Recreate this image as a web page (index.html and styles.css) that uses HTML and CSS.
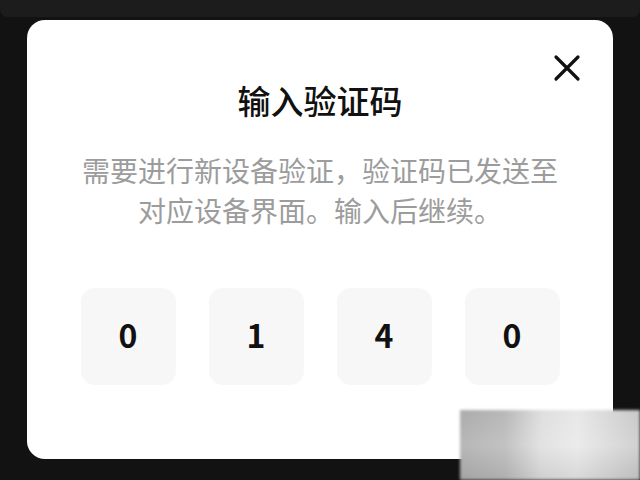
FILE: index.html
```html
<!DOCTYPE html>
<html lang="zh-CN">
<head>
<meta charset="utf-8">
<title>输入验证码</title>
<link rel="stylesheet" href="styles.css">
</head>
<body>
<div class="screen">
  <div class="topband"></div>
  <div class="dialog">
    <button class="close" aria-label="关闭">
      <svg width="28" height="28" viewBox="0 0 28 28"><path d="M3 3 L25 25 M25 3 L3 25" stroke="#111" stroke-width="3.2" stroke-linecap="round" fill="none"/></svg>
    </button>
    <h1 class="title">输入验证码</h1>
    <p class="desc">需要进行新设备验证，验证码已发送至<br>对应设备界面。输入后继续。</p>
    <div class="code">
      <div class="cell">0</div>
      <div class="cell">1</div>
      <div class="cell">4</div>
      <div class="cell">0</div>
    </div>
  </div>
  <div class="mark"></div>
</div>
</body>
</html>
```

FILE: styles.css
```css
html, body {
  margin: 0;
  padding: 0;
  background: #121212;
}
.screen {
  position: relative;
  width: 640px;
  height: 480px;
  overflow: hidden;
  background: #121212;
  font-family: "Noto Sans CJK SC", "Noto Sans", sans-serif;
}
.topband {
  position: absolute;
  left: 0;
  top: 0;
  width: 640px;
  height: 17px;
  background: #1c1c1c;
  border-radius: 0 0 8px 8px;
}
.dialog {
  position: relative;
  margin: 20px 0 0 27px;
  width: 586px;
  height: 439px;
  box-sizing: border-box;
  background: #ffffff;
  border-radius: 18px;
  padding-top: 58px;
  display: flex;
  flex-direction: column;
  align-items: center;
}
.close {
  position: absolute;
  left: 526px;
  top: 34px;
  width: 28px;
  height: 28px;
  padding: 0;
  border: 0;
  background: transparent;
  display: flex;
}
.title {
  margin: 0;
  font-size: 33px;
  line-height: 45px;
  font-weight: 500;
  color: #111;
}
.desc {
  margin: 27px 0 0;
  font-size: 28px;
  line-height: 40px;
  color: #9c9c9c;
  text-align: center;
}
.code {
  margin-top: 58px;
  display: flex;
  gap: 33px;
}
.cell {
  width: 95px;
  height: 97px;
  box-sizing: border-box;
  padding-bottom: 5px;
  border-radius: 14px;
  background: #f7f7f7;
  display: flex;
  align-items: center;
  justify-content: center;
  font-weight: 700;
  font-size: 32px;
  color: #111;
}
.mark {
  position: absolute;
  left: 460px;
  top: 410px;
  width: 180px;
  height: 70px;
  background:
    linear-gradient(180deg, rgba(255,255,255,0) 0%, rgba(255,255,255,0.15) 50%, rgba(120,120,120,0.15) 100%),
    linear-gradient(90deg, #ababab 0%, #b8b8b8 25%, #dedede 45%, #e8e8e8 65%, #d6d6d6 85%, #c8c8c8 100%);
  filter: blur(1.5px);
}
```
